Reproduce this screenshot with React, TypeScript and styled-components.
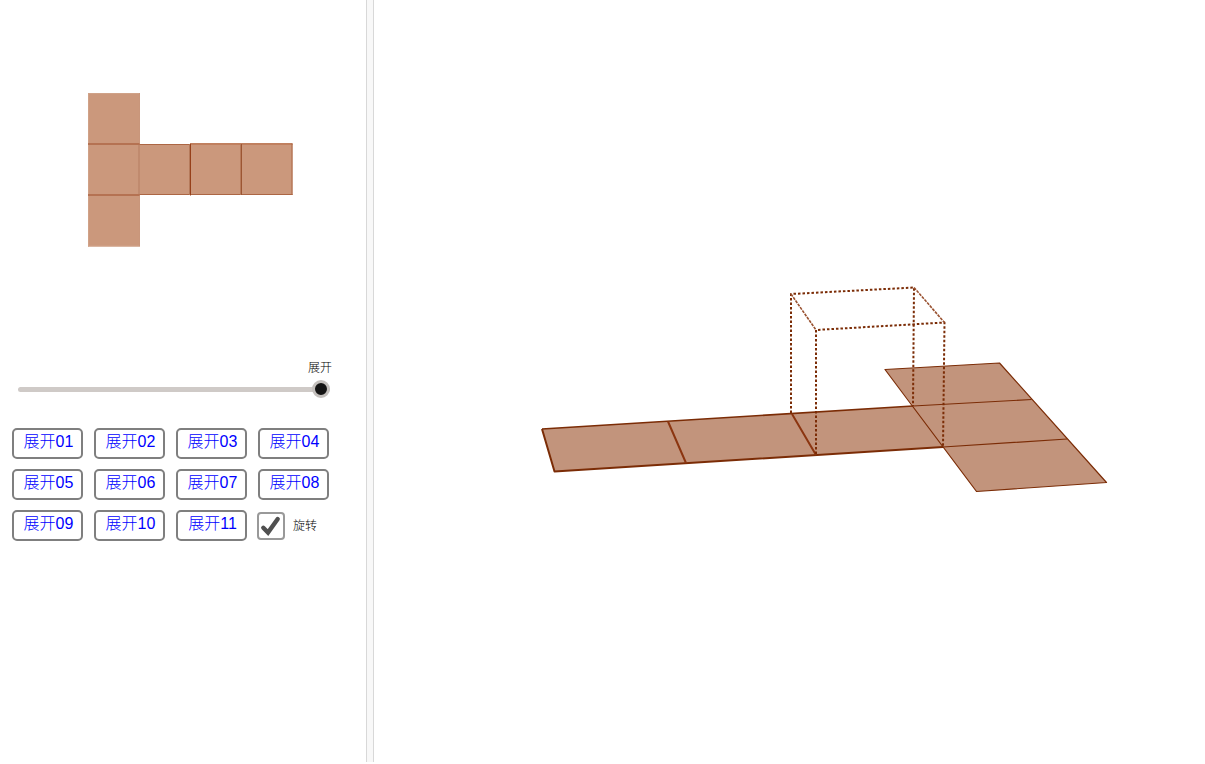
import React, { useState } from "react";
import styled, { createGlobalStyle } from "styled-components";

const GlobalStyle = createGlobalStyle`
  * { box-sizing: border-box; }
  body {
    margin: 0;
    background: #ffffff;
    font-family: "Liberation Sans", "Noto Sans CJK SC", sans-serif;
  }
`;

const Page = styled.main`
  display: flex;
  height: calc(100vh - 2px);
  overflow: hidden;
`;

const Sidebar = styled.section`
  flex: 0 0 366px;
  min-width: 0;
`;

const Divider = styled.div`
  flex: 0 0 8px;
  border: solid #d8d8d8;
  border-width: 0 1px;
  background: #f8f8f8;
`;

const SpaceView = styled.section`
  flex: 1;
  min-width: 0;
`;

const Drawing = styled.svg`
  display: block;
  width: 100%;
  height: auto;
`;

const SliderField = styled.label`
  display: flex;
  flex-direction: column;
  gap: 4px;
  padding: 10px 36px 0 18px;
`;

const SmallText = styled.span<{ $end?: boolean }>`
  font-size: 12px;
  line-height: 16px;
  font-weight: 300;
  color: #000000;
  align-self: ${(p) => (p.$end ? "flex-end" : "center")};
  margin-right: ${(p) => (p.$end ? "-2px" : "0")};
`;

const Slider = styled.input`
  appearance: none;
  display: block;
  width: 100%;
  height: 18px;
  margin: 0;
  background: transparent;

  &::-webkit-slider-runnable-track {
    height: 5px;
    border-radius: 3px;
    background: #cfcac7;
  }
  &::-webkit-slider-thumb {
    appearance: none;
    width: 18px;
    height: 18px;
    margin-top: -7px;
    border: 3px solid #c4c0bd;
    border-radius: 50%;
    background: #141414;
  }
`;

const Controls = styled.div`
  display: grid;
  grid-template-columns: repeat(4, 71px);
  gap: 10px 11px;
  padding: 30px 12px 0;
`;

const UnfoldButton = styled.button`
  height: 31px;
  padding: 0 0 4px 2px;
  border: 2px solid #7f7f7f;
  border-radius: 5px;
  background: #ffffff;
  color: #0000ff;
  font-family: inherit;
  font-size: 16px;
  font-weight: 300;
  line-height: 20px;
  white-space: nowrap;
`;

const CheckField = styled.label`
  display: flex;
  align-items: center;
  gap: 8px;
  margin-left: -1px;
  white-space: nowrap;
`;

const CheckBox = styled.span`
  display: grid;
  width: 28px;
  height: 28px;

  > * { grid-area: 1 / 1; }
`;

const CheckInput = styled.input`
  appearance: none;
  width: 28px;
  height: 28px;
  margin: 0;
  border: 2px solid #999999;
  border-radius: 4px;
  background: #ffffff;

  &:not(:checked) + svg { visibility: hidden; }
`;

const CheckMark = styled.svg`
  width: 28px;
  height: 28px;
  pointer-events: none;
`;

const unfoldings = Array.from({ length: 11 }, (_, i) => `展开${String(i + 1).padStart(2, "0")}`);

function FlatNet() {
  return (
    <Drawing viewBox="0 0 366 350" role="img" aria-label="展开">
      <path d="M88 93H139.5V144H292.5V195H139.5V246.5H88Z" fill="#cb987c" />
      <g fill="none" strokeWidth="1">
        <path d="M88.5 93V246.5M88 93.5H139.5M88 246H139.5" stroke="#d0a288" />
        <path d="M139.5 93V144M139.5 195V246.5" stroke="#c9967b" />
        <path d="M139 144V195" stroke="#c08a6e" strokeWidth="2" />
        <path d="M88 144H139.5M88 195H139.5" stroke="#b57252" strokeWidth="2" />
        <path d="M139.5 144.5H190M139.5 194.5H190" stroke="#ac6644" />
        <path d="M190 144H292.5" stroke="#c0805f" strokeWidth="2" />
        <path d="M190 194.5H292.5M292 143.5V195" stroke="#ac6644" />
        <path d="M190.5 144V195.5" stroke="#96401a" />
        <path d="M189.5 144V195" stroke="#b57a5b" />
        <path d="M241.5 144V195" stroke="#9c5633" />
        <path d="M240.5 144V195" stroke="#b87b5b" />
      </g>
    </Drawing>
  );
}

function SpaceNet() {
  return (
    <Drawing viewBox="374 0 831 762" role="img" aria-label="旋转">
      <path
        d="M542 429L913 406L885 369.5L999.5 363L1106.5 482.5L976.5 491.5L943 447L554.5 471.5Z"
        fill="#c2947c"
      />
      <g fill="none" stroke="#7b2c06" strokeLinejoin="round">
        <g strokeWidth="2">
          <path d="M542 429L913 406" strokeWidth="1.7" />
          <path d="M542 429L554.5 471.5L943 447" />
          <path d="M668 421.5L686 463M792 414L816 455" stroke="#8b3510" />
        </g>
        <g strokeWidth="1.2">
          <path d="M885 369.5L999.5 363L1106.5 482.5L976.5 491.5Z" />
          <path d="M913 406L1031.5 399.5M943 447L1067 439" />
        </g>
        <g strokeWidth="2" strokeDasharray="2.5 2">
          <path d="M791 413V294L914 287.5L913 406" />
          <path d="M816 454V330L944.5 322.5L943 447" />
        </g>
        <path d="M791 294L816 330M914 287.5L944.5 322.5" strokeWidth="1.6" strokeDasharray="3 1" stroke="#9a5332" />
      </g>
    </Drawing>
  );
}

export default function App() {
  const [amount, setAmount] = useState(100);
  const [spin, setSpin] = useState(true);

  return (
    <>
      <GlobalStyle />
      <Page>
        <Sidebar>
          <FlatNet />
          <SliderField>
            <SmallText $end>展开</SmallText>
            <Slider
              type="range"
              min={0}
              max={100}
              value={amount}
              onChange={(e) => setAmount(Number(e.target.value))}
            />
          </SliderField>
          <Controls>
            {unfoldings.map((name) => (
              <UnfoldButton key={name} type="button">{name}</UnfoldButton>
            ))}
            <CheckField>
              <CheckBox>
                <CheckInput type="checkbox" checked={spin} onChange={(e) => setSpin(e.target.checked)} />
                <CheckMark viewBox="0 0 28 28" aria-hidden="true">
                  <path d="M6.3 15.8L11 20.5L20.7 7" fill="none" stroke="#505050" strokeWidth="4.4" strokeLinecap="round" />
                </CheckMark>
              </CheckBox>
              <SmallText>旋转</SmallText>
            </CheckField>
          </Controls>
        </Sidebar>
        <Divider />
        <SpaceView>
          <SpaceNet />
        </SpaceView>
      </Page>
    </>
  );
}
